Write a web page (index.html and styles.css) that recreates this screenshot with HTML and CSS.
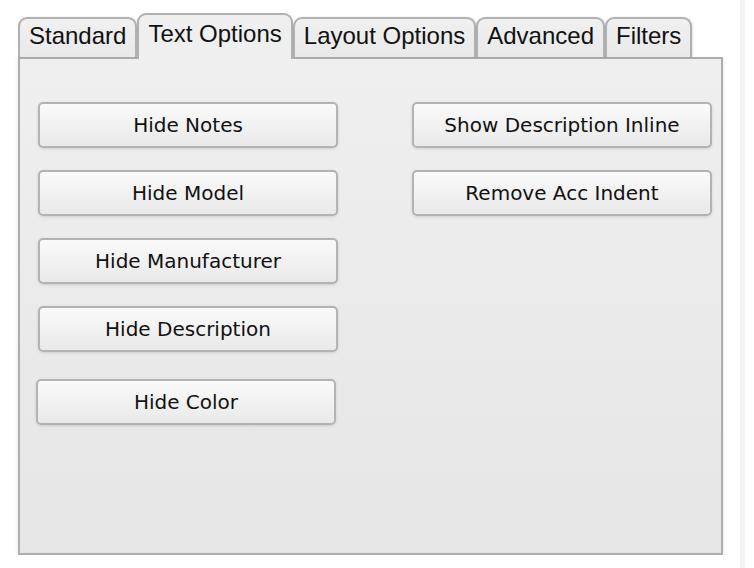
FILE: index.html
```html
<!doctype html>
<html lang="en">
  <head>
    <meta charset="UTF-8" />
    <title>Options</title>
    <link rel="stylesheet" href="styles.css">
  </head>
  <body>
    <div class="options">
      <div class="tabs">
        <div class="tab">Standard</div>
        <div class="tab active">Text Options</div>
        <div class="tab">Layout Options</div>
        <div class="tab">Advanced</div>
        <div class="tab">Filters</div>
      </div>

      <div class="panel">
        <div class="column">
          <button class="option-button">Hide Notes</button>
          <button class="option-button">Hide Model</button>
          <button class="option-button">Hide Manufacturer</button>
          <button class="option-button">Hide Description</button>
          <button class="option-button color-button">Hide Color</button>
        </div>
        <div class="column">
          <button class="option-button">Show Description Inline</button>
          <button class="option-button">Remove Acc Indent</button>
        </div>
      </div>
    </div>
    <div class="page-edge"></div>
  </body>
</html>
```

FILE: styles.css
```css
body {
  margin: 0;
  background: white;
  font-family: "Liberation Sans", Arial, sans-serif;
}

.options {
  width: 705px;
  margin-left: 18px;
  padding-top: 13px;
}

.tabs {
  display: flex;
  align-items: flex-end;
  height: 44px;
}

.tab {
  box-sizing: border-box;
  height: 40px;
  padding: 3px 9px 0 9px;
  border: 2px solid #b0b0b0;
  border-bottom: none;
  border-radius: 9px 9px 0 0;
  background: linear-gradient(#f0f0f0, #e9e9e9);
  font-size: 24px;
  line-height: 28px;
  color: #111;
  box-shadow: 1px 0 2px rgba(0, 0, 0, 0.12);
}

.tab.active {
  height: 46px;
  margin-bottom: -2px;
  padding-top: 5px;
  background: #efefef;
  position: relative;
  z-index: 1;
  box-shadow: none;
}

.panel {
  box-sizing: border-box;
  height: 498px;
  display: flex;
  gap: 74px;
  padding: 43px 0 0 18px;
  border: 2px solid #adadad;
  background: linear-gradient(#efefef, #e6e6e6);
  box-shadow: 0 2px 4px rgba(0, 0, 0, 0.12);
}

.column {
  display: flex;
  flex-direction: column;
  gap: 22px;
}

.option-button {
  box-sizing: border-box;
  width: 300px;
  height: 46px;
  border: 2px solid #b3b3b3;
  border-radius: 5px;
  background: linear-gradient(#fafafa, #e9e9e9);
  box-shadow: 0 1px 3px rgba(0, 0, 0, 0.12);
  font-family: "DejaVu Sans", Verdana, sans-serif;
  font-size: 20px;
  color: #111;
  padding: 0;
}

.color-button {
  margin-top: 5px;
  margin-left: -2px;
}

.page-edge {
  position: absolute;
  top: 0;
  left: 740px;
  width: 5px;
  height: 568px;
  background: #f3f3f3;
}
```
